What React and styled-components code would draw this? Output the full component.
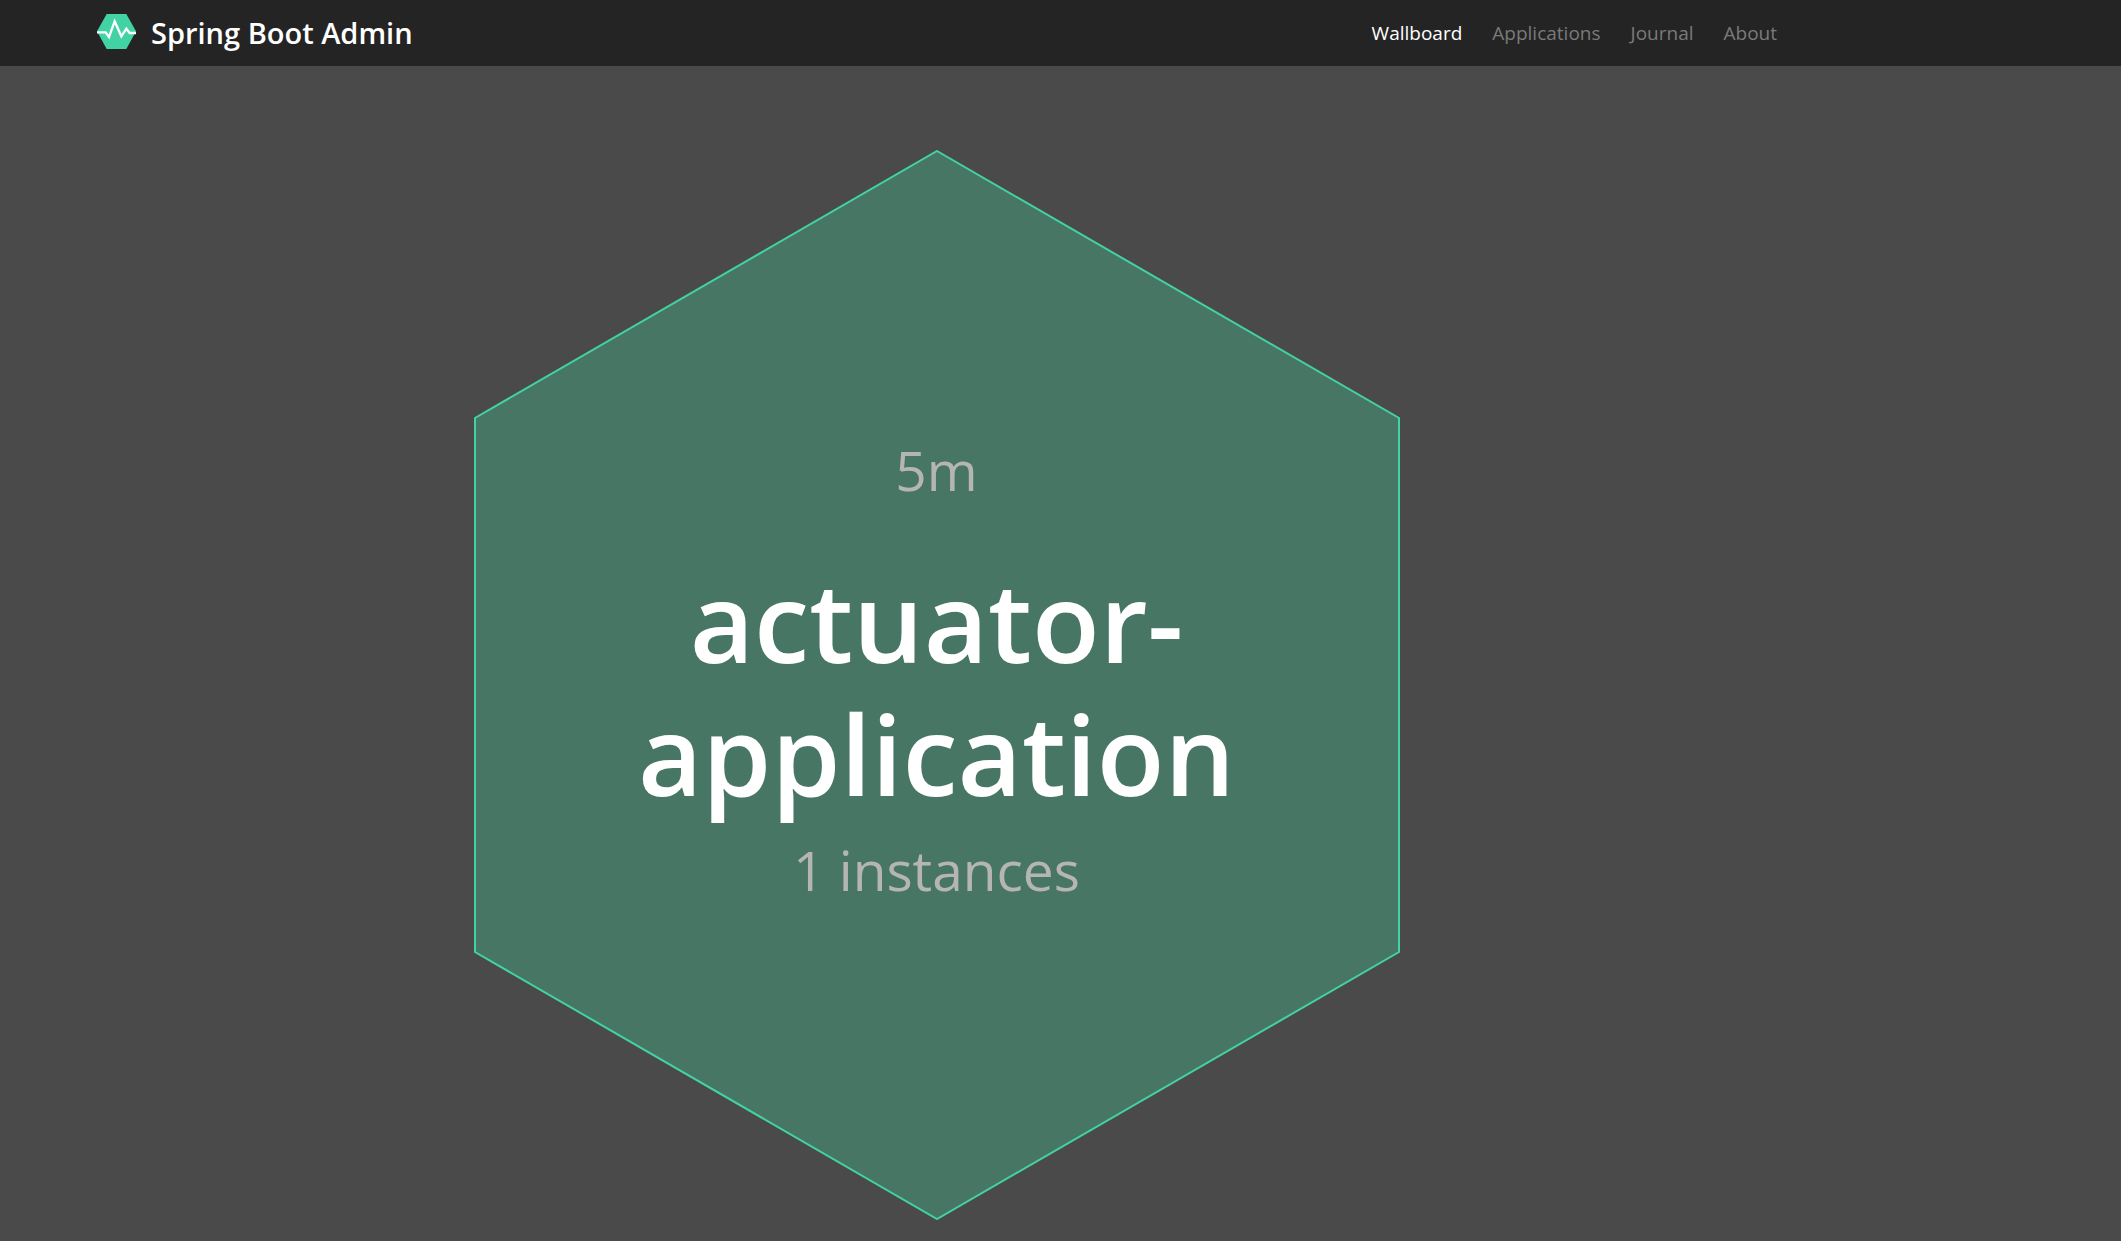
import React from "react";
import styled, { createGlobalStyle } from "styled-components";

const GlobalStyle = createGlobalStyle`
  *, *::before, *::after {
    box-sizing: border-box;
  }
  body {
    margin: 0;
    background: #4a4a4a;
    color: #ffffff;
    font-family: "Open Sans", "Noto Sans", sans-serif;
  }
`;

const Page = styled.div`
  display: flex;
  flex-direction: column;
  min-height: 100vh;
`;

const Navbar = styled.header`
  display: flex;
  align-items: center;
  justify-content: space-between;
  height: 66px;
  padding: 0 344px 0 97px;
  background: #242424;
`;

const Brand = styled.a`
  display: flex;
  align-items: center;
  gap: 15px;
  color: #ffffff;
  font-size: 29px;
  font-weight: 600;
  line-height: 40px;
  text-decoration: none;
  white-space: nowrap;
`;

const Logo = styled.svg`
  display: block;
  width: 39px;
  height: 35px;
  margin-bottom: 3px;
`;

const Menu = styled.nav`
  display: flex;
  align-items: center;
  gap: 30px;
`;

const MenuLink = styled.a`
  color: ${({ $active }) => ($active ? "#ffffff" : "#7a7a7a")};
  font-size: 19px;
  line-height: 28px;
  text-decoration: none;
`;

const Wallboard = styled.main`
  display: flex;
  flex: 1;
  justify-content: center;
  padding: 84px 248px 21px 0;
`;

const Application = styled.a`
  display: grid;
  height: calc(100vh - 171px);
  min-height: 640px;
  aspect-ratio: 926 / 1070;
  color: inherit;
  text-align: center;
  text-decoration: none;

  & > * {
    grid-area: 1 / 1;
  }
`;

const Hexagon = styled.svg`
  display: block;
  width: 100%;
  height: 100%;
  fill: #487665;
  stroke: #42d3a5;
  stroke-width: 2;
`;

const Details = styled.div`
  display: flex;
  flex-direction: column;
  align-items: center;
  justify-content: center;
  padding-bottom: 30px;
`;

const Meta = styled.span`
  color: #b5b5b5;
  font-size: 55px;
  line-height: 80px;
`;

const Name = styled.h1`
  width: 640px;
  margin: 44px 0 10px;
  font-size: 111px;
  font-weight: 600;
  line-height: 133px;
`;

const menu = ["Wallboard", "Applications", "Journal", "About"];

export default function App() {
  return (
    <>
      <GlobalStyle />
      <Page>
        <Navbar>
          <Brand href="#">
            <Logo viewBox="0 0 117 105" aria-hidden="true">
              <path d="M29 0H88L117 52L88 105H29L0 52Z" fill="#42d3a5" />
              <path
                d="M0 55H26L36 69L53 22L73 67L88 44L98 57H117"
                fill="none"
                stroke="#ffffff"
                strokeWidth="7"
              />
            </Logo>
            Spring Boot Admin
          </Brand>
          <Menu aria-label="Main">
            {menu.map((item) => (
              <MenuLink key={item} href="#" $active={item === "Wallboard"}>
                {item}
              </MenuLink>
            ))}
          </Menu>
        </Navbar>
        <Wallboard>
          <Application href="#">
            <Hexagon viewBox="0 0 926 1070" aria-hidden="true">
              <path d="M463 1L925 268V802L463 1069L1 802V268Z" />
            </Hexagon>
            <Details>
              <Meta>5m</Meta>
              <Name>actuator-application</Name>
              <Meta>1 instances</Meta>
            </Details>
          </Application>
        </Wallboard>
      </Page>
    </>
  );
}
